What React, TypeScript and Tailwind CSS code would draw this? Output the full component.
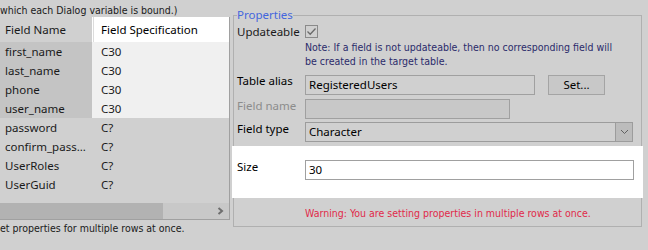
import React from "react";

const seg = { fontFamily: '"Noto Sans", "Open Sans", sans-serif' };
const tah = {
  fontFamily: '"DejaVu Sans Condensed", "DejaVu Sans", Verdana, sans-serif',
  fontStretch: "condensed" as const,
};

const rows: { name: string; spec: string; sel: boolean }[] = [
  { name: "first_name", spec: "C30", sel: true },
  { name: "last_name", spec: "C30", sel: true },
  { name: "phone", spec: "C30", sel: true },
  { name: "user_name", spec: "C30", sel: true },
  { name: "password", spec: "C?", sel: false },
  { name: "confirm_pass...", spec: "C?", sel: false },
  { name: "UserRoles", spec: "C?", sel: false },
  { name: "UserGuid", spec: "C?", sel: false },
];

export default function App() {
  return (
    <div
      className="w-[648px] h-[250px] overflow-hidden bg-[#d0d0d0] flex text-[11.5px] text-[#1a1a1a]"
      style={seg}
    >
      {/* Left column */}
      <div className="w-[230px] flex flex-col shrink-0">
        <div
          className="h-[17px] pt-[3px] leading-[15px] whitespace-nowrap text-[10.5px] overflow-visible"
          style={tah}
        >
          which each Dialog variable is bound.)
        </div>
        <div className="h-[203px] border-r border-b border-[#a0a0a0] flex flex-col">
          {/* header */}
          <div className="flex h-[25px] shrink-0">
            <div className="w-[92px] bg-[#d0d0d0] pl-[5px] leading-[25px]">Field Name</div>
            <div className="w-[1px] bg-white" />
            <div className="w-[1px] bg-[#dcdcdc]" />
            <div className="flex-1 bg-white pl-[7px] leading-[25px] text-black">Field Specification</div>
          </div>
          <div className="flex-1 flex flex-col">
            {rows.map((r) => (
              <div key={r.name} className="flex h-[19px] leading-[19px]">
                <div
                  className={
                    "w-[92px] pl-[5px] whitespace-nowrap " +
                    (r.sel ? "bg-[#c4c4c4]" : "bg-[#d0d0d0]")
                  }
                >
                  {r.name}
                </div>
                <div
                  className={
                    "flex-1 pl-[9px] " + (r.sel ? "bg-[#f0f0f0]" : "bg-[#d0d0d0]")
                  }
                >
                  {r.spec}
                </div>
              </div>
            ))}
          </div>
          {/* scrollbar */}
          <div className="h-[16px] flex bg-[#c8c8c8] shrink-0">
            <div className="w-[163px] bg-[#b2b2b2]" />
            <div className="flex-1 flex items-center justify-end pr-[5px]">
              <svg width="7" height="8" viewBox="0 0 7 8">
                <path d="M1.5 1 L5 4 L1.5 7" stroke="#6e6e6e" strokeWidth="2" fill="none" />
              </svg>
            </div>
          </div>
        </div>
        <div
          className="h-[16px] leading-[16px] whitespace-nowrap text-[10.5px]"
          style={tah}
        >
          et properties for multiple rows at once.
        </div>
      </div>

      {/* Right group box */}
      <div className="ml-[3px] w-[409px] mt-[7px]">
        <fieldset className="border border-[#b0b0b0] h-[220px] px-[3px] pt-0 pb-0 m-0 min-w-0">
          <legend className="px-0 text-[#4466dd] leading-[16px]">Properties</legend>
          <div className="flex flex-col">
            {/* Updateable */}
            <div className="flex h-[16px] items-start mt-[1px]">
              <div className="w-[68px] leading-[16px]">Updateable</div>
              <div className="w-[13px] h-[13px] border border-[#8a8a8a] bg-[#d0d0d0] flex items-center justify-center mt-[1px]">
                <svg width="11" height="11" viewBox="0 0 11 11">
                  <path d="M1.5 5.5 L4.2 8.2 L9.5 2.5" stroke="#6a6a6a" strokeWidth="1.3" fill="none" />
                </svg>
              </div>
            </div>
            <div
              className="pl-[68px] text-[10.5px] leading-[14px] text-[#2b2b6b] whitespace-nowrap"
              style={tah}
            >
              <div>Note: If a field is not updateable, then no corresponding field will</div>
              <div>be created in the target table.</div>
            </div>
            {/* Table alias */}
            <div className="flex items-start mt-[7px] h-[20px]">
              <div className="w-[68px] leading-[16px] -mt-[2px] text-black">Table alias</div>
              <div className="w-[230px] h-[20px] border border-[#a0a0a0] bg-[#d0d0d0] pl-[3px] leading-[18px] text-black">
                RegisteredUsers
              </div>
              <div className="ml-[13px] w-[57px] h-[20px] border border-[#a4a4a4] bg-[#c8c8c8] text-center leading-[18px] text-black">
                Set...
              </div>
            </div>
            {/* Field name */}
            <div className="flex items-start mt-[4px] h-[20px]">
              <div className="w-[68px] leading-[16px] -mt-[1px] text-[#8c8c8c]">Field name</div>
              <div className="w-[205px] h-[20px] border border-[#a0a0a0] bg-[#c8c8c8]" />
            </div>
            {/* Field type */}
            <div className="flex items-start mt-[3px] h-[20px]">
              <div className="w-[68px] leading-[16px] -mt-[1px] text-black">Field type</div>
              <div className="w-[328px] h-[20px] border border-[#9c9c9c] bg-[#d0d0d0] flex">
                <div className="flex-1 pl-[3px] leading-[18px] text-black">Character</div>
                <div className="w-[17px] bg-[#bcbcbc] border-l border-[#9c9c9c] flex items-center justify-center">
                  <svg width="9" height="6" viewBox="0 0 9 6">
                    <path d="M1 1 L4.5 4.5 L8 1" stroke="#606060" strokeWidth="1" fill="none" />
                  </svg>
                </div>
              </div>
            </div>
            {/* Size band */}
            <div className="-mx-[5px] mt-[4px] h-[52px] bg-white flex items-start px-[5px]">
              <div className="w-[68px] leading-[16px] mt-[13px] text-black">Size</div>
              <div className="mt-[14px] w-[329px] h-[20px] border border-[#a0a0a0] bg-white pl-[3px] leading-[18px] text-black">
                30
              </div>
            </div>
            <div
              className="pl-[68px] mt-[8px] text-[10.5px] leading-[14px] text-[#e02a4a] whitespace-nowrap"
              style={tah}
            >
              Warning: You are setting properties in multiple rows at once.
            </div>
          </div>
        </fieldset>
      </div>
    </div>
  );
}
